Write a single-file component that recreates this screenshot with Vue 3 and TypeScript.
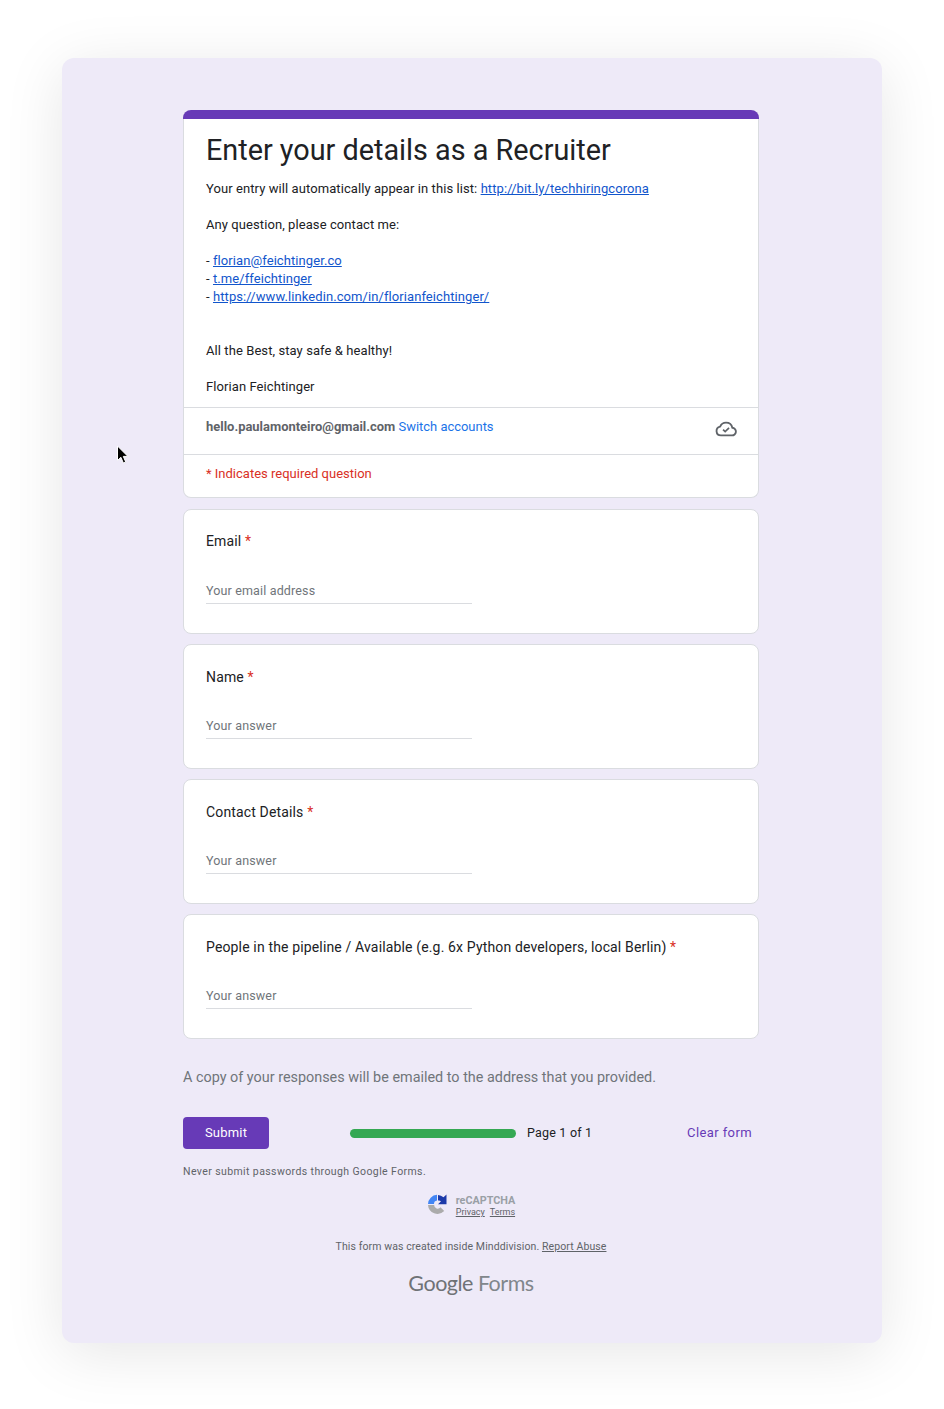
<script setup lang="ts">
const questions = [
  { label: 'Email', hint: 'Your email address' },
  { label: 'Name', hint: 'Your answer' },
  { label: 'Contact Details', hint: 'Your answer' },
  { label: 'People in the pipeline / Available (e.g. 6x Python developers, local Berlin)', hint: 'Your answer' },
]
</script>

<template>
  <div class="page">
    <div class="window">
      <svg class="cursor" width="14" height="20" viewBox="0 0 14 20">
        <path d="M1.5 1v14.5l3.4-3.2 2.4 5.6 2.4-1-2.4-5.5h4.6z" fill="#000" stroke="#fff" stroke-width="1" />
      </svg>
      <main class="form">
        <section class="card head">
          <div class="accent"></div>
          <h1>Enter your details as a Recruiter</h1>
          <div class="desc">
            <p>Your entry will automatically appear in this list: <a>http://bit.ly/techhiringcorona</a></p>
            <p class="gap">Any question, please contact me:</p>
            <p class="gap">- <a>florian@feichtinger.co</a></p>
            <p>- <a>t.me/ffeichtinger</a></p>
            <p>- <a>https://www.linkedin.com/in/florianfeichtinger/</a></p>
            <p class="gap-big">All the Best, stay safe &amp; healthy!</p>
            <p class="gap">Florian Feichtinger</p>
          </div>
          <div class="account">
            <div><b>hello.paulamonteiro@gmail.com</b> <span class="switch">Switch accounts</span></div>
            <svg width="22" height="22" viewBox="0 0 24 24" fill="none" stroke="#5f6368" stroke-width="2">
              <path d="M6.5 19h11.8a4.2 4.2 0 0 0 .6-8.4A7 7 0 0 0 12 5a7 7 0 0 0-6.4 4.3A4.9 4.9 0 0 0 6.5 19z" />
              <path d="M8.8 12.6l2.3 2.3 4.2-4.2" stroke-width="1.8" />
            </svg>
          </div>
          <div class="required">* Indicates required question</div>
        </section>

        <section v-for="q in questions" :key="q.label" class="card question">
          <div class="label">{{ q.label }} <span class="star">*</span></div>
          <div class="field">{{ q.hint }}</div>
        </section>

        <p class="copy">A copy of your responses will be emailed to the address that you provided.</p>

        <div class="actions">
          <button class="submit">Submit</button>
          <div class="progress">
            <div class="bar"></div>
            <span>Page 1 of 1</span>
          </div>
          <span class="clear">Clear form</span>
        </div>

        <p class="never">Never submit passwords through Google Forms.</p>

        <div class="captcha">
          <svg class="captcha-icon" width="21" height="21" viewBox="0 0 21 21">
            <path d="M1 10A9.5 9.5 0 0 1 10 .8V6.5A3.5 3.5 0 0 0 7 10z" fill="#4285f4" />
            <path d="M11 1a9.5 9.5 0 0 1 5.5 2.2L19.5.5v9.7H11l3-3A3.5 3.5 0 0 0 11 6.5z" fill="#1c3aa9" />
            <path d="M1 11h6.2a3.5 3.5 0 0 0 6.3 2.2l3.7 3.8A9.5 9.5 0 0 1 1 11z" fill="#ababab" />
          </svg>
          <div class="captcha-text">
            <strong>reCAPTCHA</strong>
            <div class="captcha-links"><u>Privacy</u><u>Terms</u></div>
          </div>
        </div>

        <p class="created">This form was created inside Minddivision. <u>Report Abuse</u></p>

        <div class="brand"><span class="google">Google</span> <span class="forms">Forms</span></div>
      </main>
    </div>
  </div>
</template>

<style>
html, body {
  margin: 0;
  background: #fff;
}
</style>

<style scoped>
.page {
  height: 1409px;
  box-sizing: border-box;
  padding: 58px 62px 66px;
  font-family: Roboto, "Liberation Sans", sans-serif;
  overflow: hidden;
}
.window {
  position: relative;
  height: 1285px;
  box-sizing: border-box;
  padding: 52px 0 0 121px;
  background: #eeeaf8;
  border-radius: 12px;
  box-shadow: 0 10px 60px rgba(0, 0, 0, 0.1);
}
.cursor {
  position: absolute;
  left: 54px;
  top: 387px;
}
.form {
  width: 576px;
}
.card {
  background: #fff;
  border: 1px solid #dadce0;
  border-radius: 8px;
  box-sizing: border-box;
  margin-bottom: 10px;
}
.head {
  height: 388px;
  margin-bottom: 11px;
  border-top: none;
}
.accent {
  height: 9px;
  margin: 0 -1px;
  border-radius: 8px 8px 0 0;
  background: #673ab7;
}
h1 {
  margin: 0;
  padding: 13px 22px 0;
  font-size: 28.8px;
  line-height: 36px;
  font-weight: 400;
  color: #202124;
}
.desc {
  padding: 12px 22px 0;
  font-size: 13px;
  letter-spacing: 0.08px;
  line-height: 18px;
  color: #202124;
  height: 239px;
  box-sizing: border-box;
}
.desc p {
  margin: 0;
}
.desc .gap {
  margin-top: 18px;
}
.desc .gap-big {
  margin-top: 36px;
}
.desc a {
  color: #1155cc;
  text-decoration: underline;
}
.account {
  display: flex;
  justify-content: space-between;
  height: 48px;
  box-sizing: border-box;
  padding: 10px 21px 0 22px;
  border-top: 1px solid #dadce0;
  border-bottom: 1px solid #dadce0;
  font-size: 12.95px;
  line-height: 18px;
}
.account b {
  color: #5f6368;
  font-weight: 700;
}
.switch {
  color: #1a73e8;
}
.required {
  padding: 10px 22px 0;
  font-size: 13px;
  line-height: 18px;
  color: #d93025;
}
.question {
  height: 125px;
  padding: 22px 22px 0;
}
.question + .question {
  padding-top: 23px;
}
.question + .question .field {
  margin-top: 22px;
}
.label {
  font-size: 14px;
  letter-spacing: 0.15px;
  line-height: 18px;
  color: #202124;
}
.star {
  color: #d93025;
}
.field {
  width: 266px;
  margin-top: 23px;
  padding: 10px 0 4px;
  font-size: 12.5px;
  letter-spacing: 0.15px;
  line-height: 16px;
  color: #70757a;
  border-bottom: 1px solid #dadce0;
}
.copy {
  margin: 29px 0 0;
  font-size: 14.4px;
  line-height: 20px;
  color: #70757a;
}
.actions {
  display: flex;
  align-items: center;
  margin-top: 29px;
  height: 32px;
}
.submit {
  width: 86px;
  height: 32px;
  padding: 0 0 2px;
  border: none;
  border-radius: 4px;
  background: #673ab7;
  color: #fff;
  font-family: inherit;
  font-size: 13px;
  font-weight: 450;
  letter-spacing: 0.2px;
}
.progress {
  display: flex;
  align-items: center;
  gap: 11px;
  margin-left: 81px;
  font-size: 12.5px;
  letter-spacing: 0.2px;
  color: #202124;
}
.progress span {
  padding-bottom: 2px;
}
.bar {
  width: 166px;
  height: 9px;
  border-radius: 5px;
  background: #34a853;
}
.clear {
  margin-left: auto;
  margin-right: 7px;
  padding-bottom: 2px;
  font-size: 13px;
  font-weight: 450;
  letter-spacing: 0.4px;
  color: #673ab7;
}
.never {
  margin: 16px 0 0;
  font-size: 10.5px;
  letter-spacing: 0.4px;
  line-height: 14px;
  color: #5f6368;
}
.captcha {
  display: flex;
  justify-content: center;
  align-items: center;
  gap: 8px;
  margin-top: 15px;
}
.captcha-icon {
  margin-top: -3px;
}
.captcha-text {
  font-size: 9px;
  color: #5f6368;
  line-height: 11px;
}
.captcha-text strong {
  display: block;
  font-size: 10.8px;
  color: #9aa0a6;
  line-height: 13px;
}
.captcha-links {
  display: flex;
  gap: 5px;
}
.created {
  margin: 22px 0 0;
  text-align: center;
  font-size: 10.5px;
  letter-spacing: 0.1px;
  line-height: 14px;
  color: #5f6368;
}
.brand {
  margin-top: 15px;
  text-align: center;
  font-family: Lato, Roboto, sans-serif;
  font-size: 21.5px;
  letter-spacing: -0.5px;
  line-height: 28px;
  color: #80868b;
}
.google {
  color: #6f7276;
}
</style>
